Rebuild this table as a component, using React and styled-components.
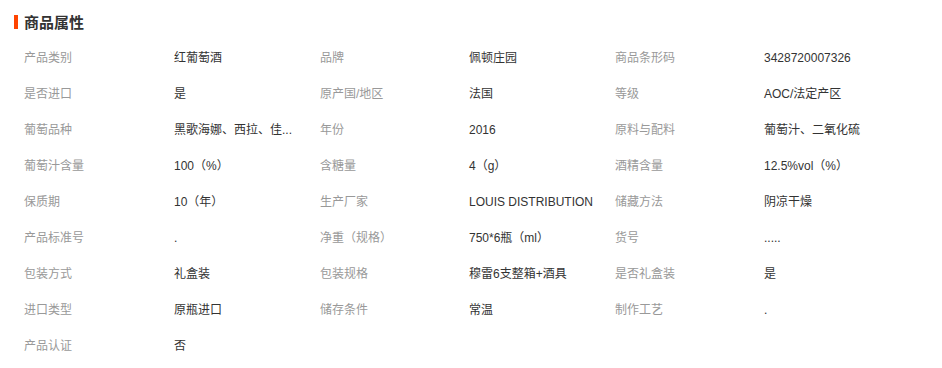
import React from "react";
import styled, { createGlobalStyle } from "styled-components";

const Global = createGlobalStyle`
  html, body { margin: 0; padding: 0; background: #fff; }
  body { font-family: "Liberation Sans", Arial, "Noto Sans CJK SC", sans-serif; }
`;

const Page = styled.section`
  padding: 15px 14px 0 14px;
  width: 942px;
  box-sizing: border-box;
`;

const Header = styled.h2`
  display: flex;
  align-items: center;
  gap: 6px;
  margin: 0;
  height: 14px;
  font-size: 15px;
  font-weight: bold;
  color: #333;
  line-height: 14px;
  font-family: "Noto Sans CJK SC", sans-serif;
`;

const Bar = styled.span`
  display: block;
  width: 4px;
  height: 14px;
  background: #ff4400;
`;

const Grid = styled.dl`
  display: grid;
  grid-template-columns: 150px 146px 149px 146px 149px 1fr;
  grid-auto-rows: 36px;
  margin: 11px 0 0 10px;
  padding: 0;
`;

const Label = styled.dt`
  margin: 0;
  font-size: 12px;
  line-height: 36px;
  color: #999;
  white-space: nowrap;
`;

const Value = styled.dd`
  margin: 0;
  font-size: 12px;
  line-height: 36px;
  color: #333;
  white-space: nowrap;
`;

const items = [
  ["产品类别", "红葡萄酒"],
  ["品牌", "佩顿庄园"],
  ["商品条形码", "3428720007326"],
  ["是否进口", "是"],
  ["原产国/地区", "法国"],
  ["等级", "AOC/法定产区"],
  ["葡萄品种", "黑歌海娜、西拉、佳..."],
  ["年份", "2016"],
  ["原料与配料", "葡萄汁、二氧化硫"],
  ["葡萄汁含量", "100（%）"],
  ["含糖量", "4（g）"],
  ["酒精含量", "12.5%vol（%）"],
  ["保质期", "10（年）"],
  ["生产厂家", "LOUIS DISTRIBUTION"],
  ["储藏方法", "阴凉干燥"],
  ["产品标准号", "."],
  ["净重（规格）", "750*6瓶（ml）"],
  ["货号", "....."],
  ["包装方式", "礼盒装"],
  ["包装规格", "穆雷6支整箱+酒具"],
  ["是否礼盒装", "是"],
  ["进口类型", "原瓶进口"],
  ["储存条件", "常温"],
  ["制作工艺", "."],
  ["产品认证", "否"],
];

export default function App() {
  return (
    <>
      <Global />
      <Page>
        <Header>
          <Bar />
          商品属性
        </Header>
        <Grid>
          {items.map(([k, v]) => (
            <React.Fragment key={k}>
              <Label>{k}</Label>
              <Value>{v}</Value>
            </React.Fragment>
          ))}
        </Grid>
      </Page>
    </>
  );
}
